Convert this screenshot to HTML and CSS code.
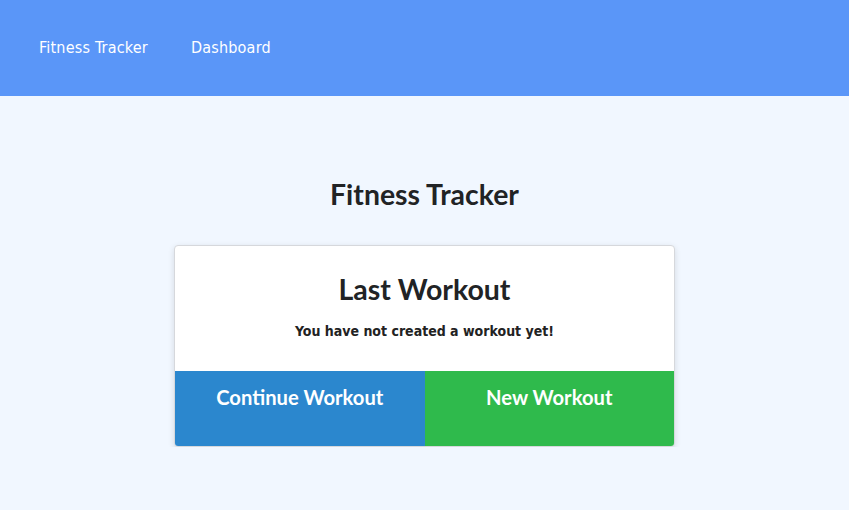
FILE: index.html
```html
<!DOCTYPE html>
<html>
<head>
<meta charset="utf-8">
<link rel="stylesheet" href="styles.css">
</head>
<body>
<nav class="nav">
  <a class="nav-link" href="#">Fitness Tracker</a>
  <a class="nav-link" href="#">Dashboard</a>
</nav>
<main class="main">
  <h1 class="title">Fitness Tracker</h1>
  <section class="card">
    <div class="card-body">
      <h2 class="card-title">Last Workout</h2>
      <p class="card-text">You have not created a workout yet!</p>
    </div>
    <div class="card-actions">
      <a class="btn btn-continue" href="#">Continue Workout</a>
      <a class="btn btn-new" href="#">New Workout</a>
    </div>
  </section>
</main>
</body>
</html>
```
FILE: styles.css
```css
html, body {
  margin: 0;
  padding: 0;
}
body {
  background: #f1f7ff;
  font-family: "DejaVu Sans Condensed", "DejaVu Sans", sans-serif;
  color: #222;
}
.nav {
  background: #5a96f8;
  height: 96px;
  display: flex;
  align-items: center;
  padding: 0 0 2px 39px;
  box-sizing: border-box;
  gap: 43px;
}
.nav-link {
  color: #fff;
  text-decoration: none;
  font-size: 16px;
  letter-spacing: 0.2px;
}
.main {
  display: flex;
  flex-direction: column;
  align-items: center;
  padding-top: 79px;
}
.title {
  font-family: Lato, sans-serif;
  font-weight: 700;
  font-size: 28.4px;
  margin: 0 0 32px;
  color: #212325;
  line-height: 38px;
}
.card {
  width: 501px;
  box-sizing: border-box;
  background: #fff;
  border: 1px solid #d6d8dc;
  border-radius: 4px;
  box-shadow: 0 2px 6px rgba(0,0,0,0.12);
  overflow: hidden;
}
.card-body {
  text-align: center;
  padding: 25px 0 32px;
}
.card-title {
  font-family: Lato, sans-serif;
  font-weight: 700;
  font-size: 28.5px;
  line-height: 36px;
  margin: 0 0 16px;
  color: #212325;
}
.card-text {
  font-weight: 700;
  font-size: 14px;
  margin: 0;
  color: #222;
}
.card-actions {
  display: flex;
  height: 75px;
}
.btn {
  flex: 1;
  color: #fff;
  text-decoration: none;
  font-family: Lato, sans-serif;
  font-weight: 700;
  font-size: 20.2px;
  text-align: center;
  padding-top: 14px;
  box-sizing: border-box;
}
.btn-continue {
  background: #2b87ce;
}
.btn-new {
  background: #2fba4c;
}
```
